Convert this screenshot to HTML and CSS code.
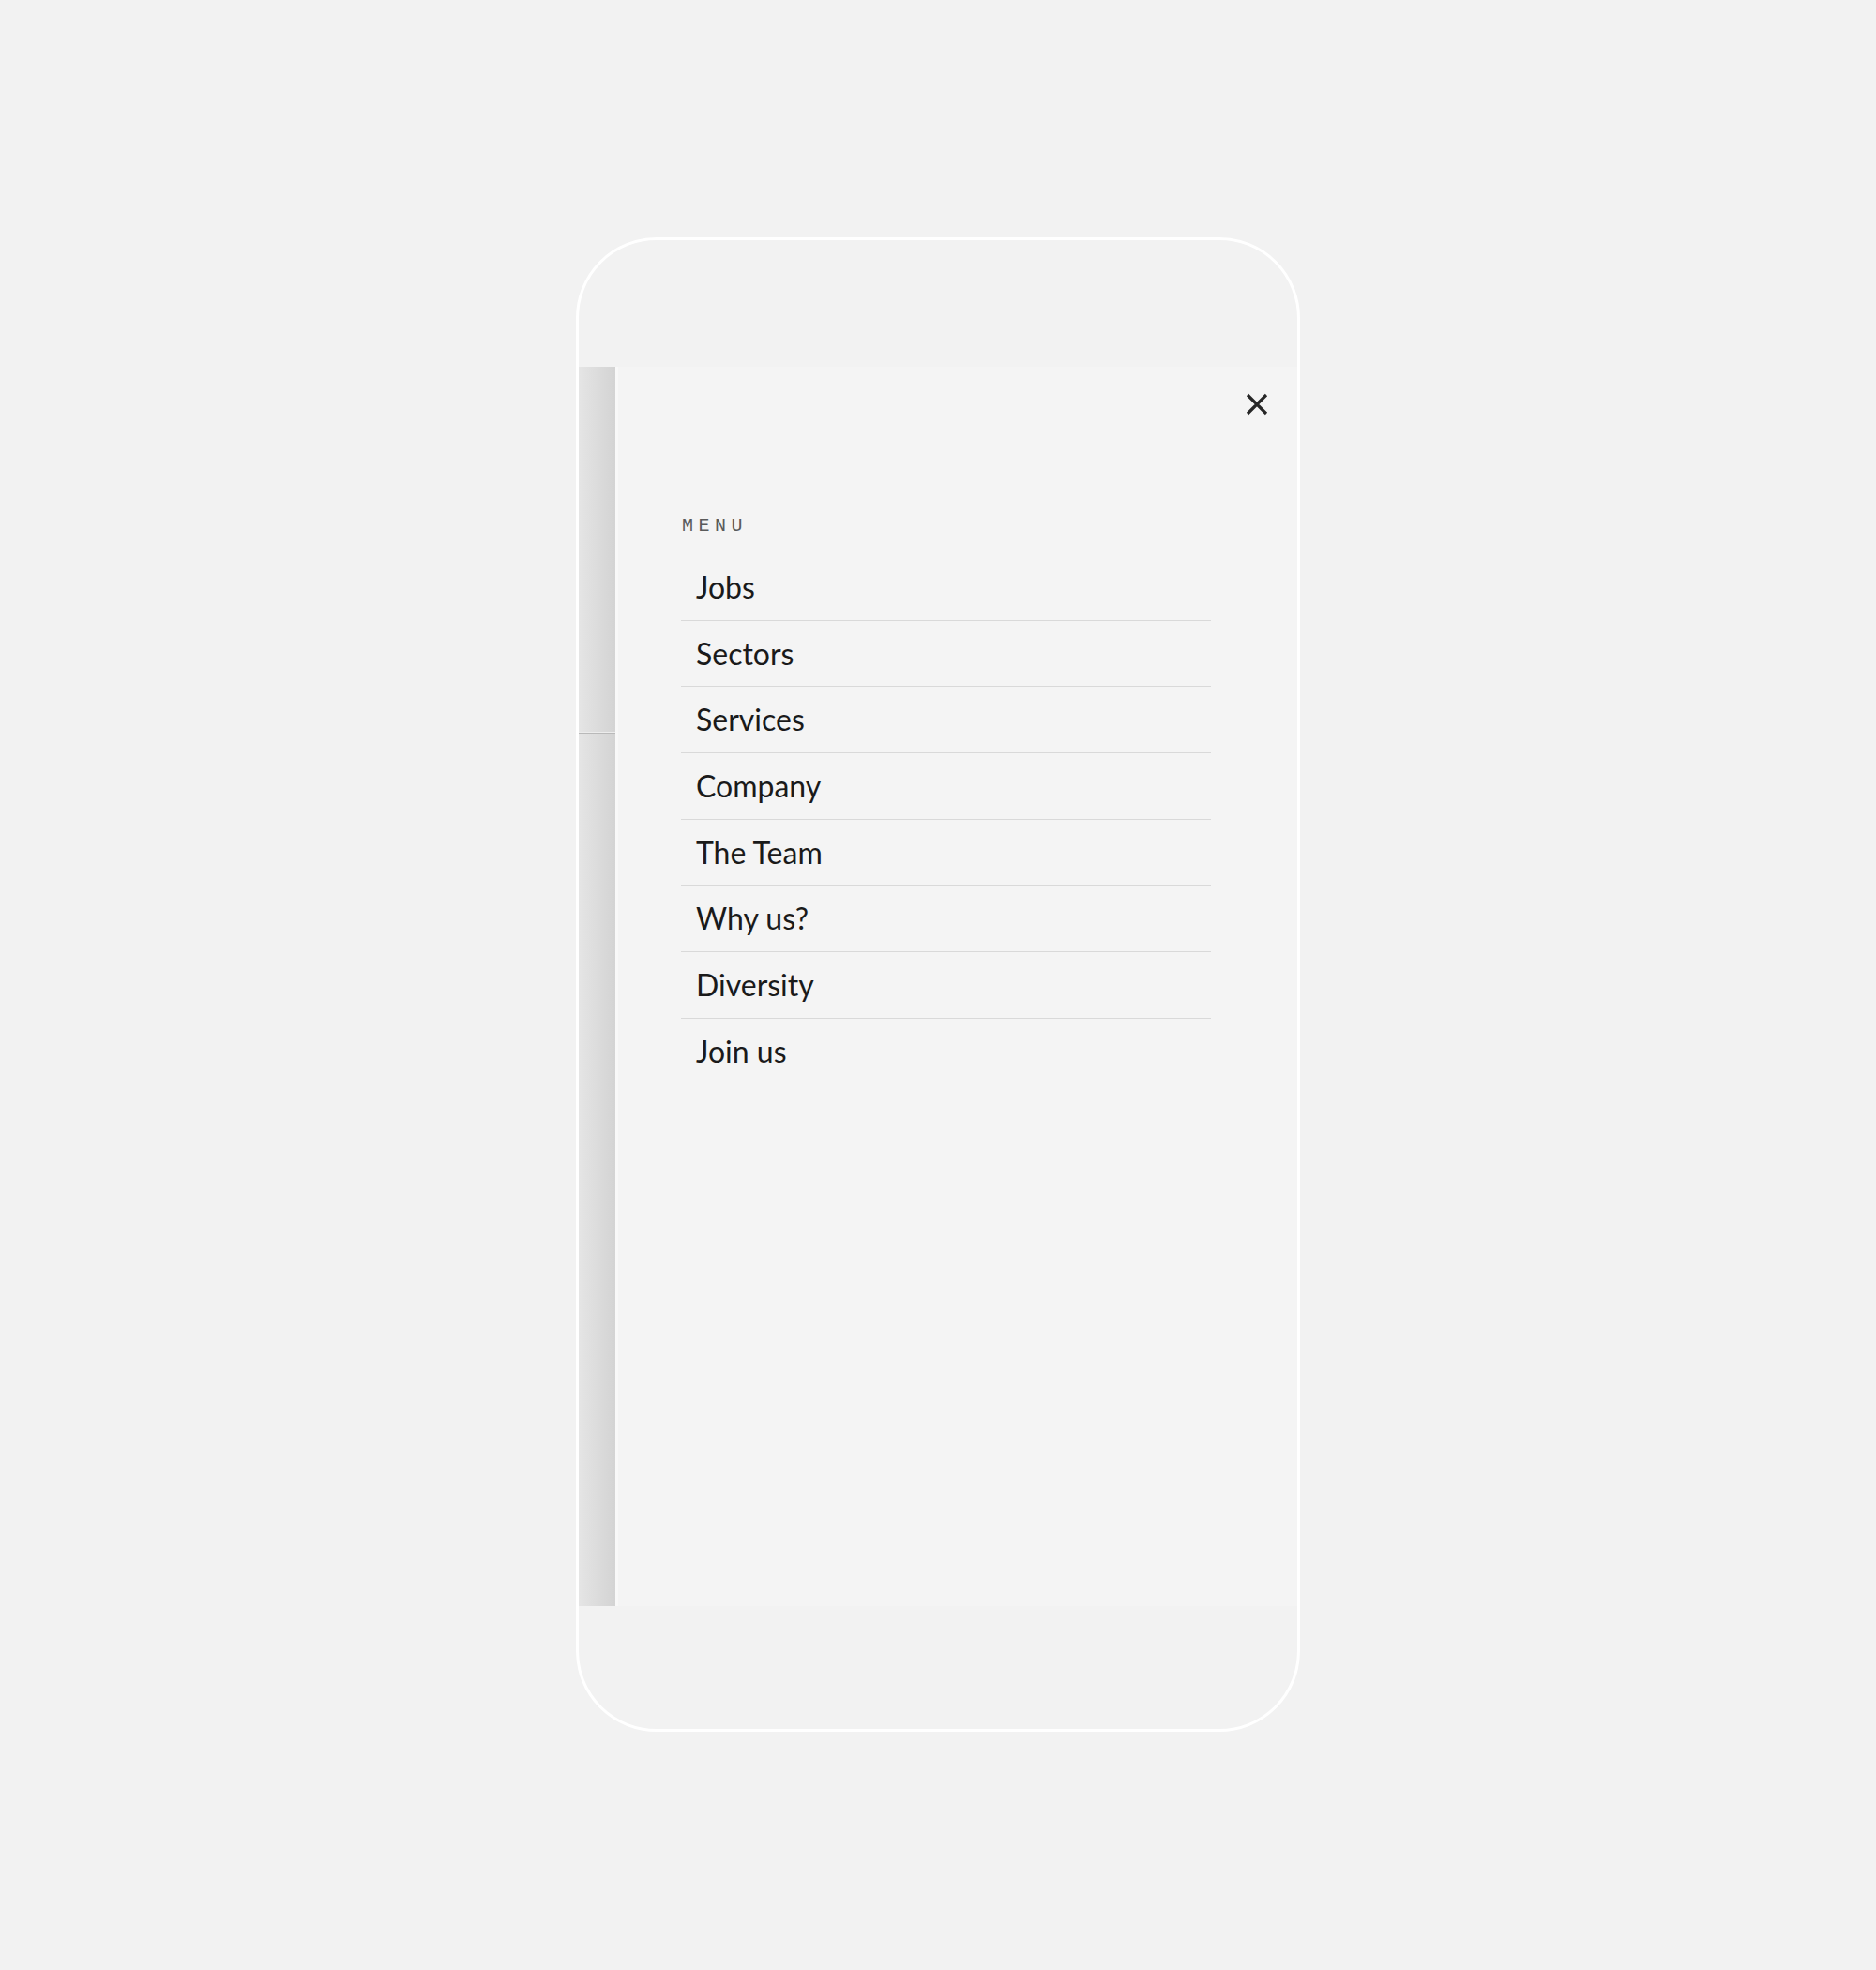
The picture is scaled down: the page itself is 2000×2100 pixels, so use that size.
FILE: index.html
```html
<!DOCTYPE html>
<html lang="en">
<head>
<meta charset="utf-8">
<title>Menu</title>
<link rel="stylesheet" href="styles.css">
</head>
<body>
<div class="device">
  <div class="device-top"></div>
  <div class="screen">
    <div class="backdrop">
      <div class="backdrop-line"></div>
    </div>
    <aside class="drawer">
      <div class="drawer-head">
        <button class="close" aria-label="Close menu">
          <svg width="24" height="24" viewBox="0 0 24 24" aria-hidden="true">
            <path d="M2 2 L22 22 M22 2 L2 22" stroke="#262626" stroke-width="3.2" fill="none"/>
          </svg>
        </button>
      </div>
      <nav class="menu">
        <div class="menu-label">MENU</div>
        <ul class="menu-list">
          <li><a href="#">Jobs</a></li>
          <li><a href="#">Sectors</a></li>
          <li><a href="#">Services</a></li>
          <li><a href="#">Company</a></li>
          <li><a href="#">The Team</a></li>
          <li><a href="#">Why us?</a></li>
          <li><a href="#">Diversity</a></li>
          <li><a href="#">Join us</a></li>
        </ul>
      </nav>
    </aside>
  </div>
</div>
</body>
</html>
```
FILE: styles.css
```css
html, body {
  margin: 0;
  padding: 0;
}

body {
  background: #f2f2f2;
  font-family: "Lato", "Liberation Sans", sans-serif;
}

.device {
  margin: 253px 0 0 614px;
  width: 772px;
  height: 1593px;
  box-sizing: border-box;
  border: 3px solid #ffffff;
  border-radius: 86px;
  display: flex;
  flex-direction: column;
  overflow: hidden;
  background: #f2f2f2;
}

.device-top {
  height: 135px;
  flex: none;
}

.screen {
  height: 1321px;
  flex: none;
  display: flex;
}

.backdrop {
  width: 39px;
  flex: none;
  background: linear-gradient(to right, #e5e5e5, #d3d3d3);
  padding-top: 390px;
  box-sizing: border-box;
}

.backdrop-line {
  height: 1px;
  background: #b9b9b9;
  box-shadow: 0 -1px 0 #ececec;
}

.drawer {
  flex: 1;
  background: #f4f4f4;
  border-left: 3px solid #f8f8f8;
}

.drawer-head {
  height: 52px;
  display: flex;
  justify-content: flex-end;
  align-items: flex-end;
  padding-right: 31px;
}

.close {
  border: 0;
  padding: 0;
  margin: 0;
  background: none;
  width: 24px;
  height: 24px;
  display: block;
  cursor: pointer;
}

.close svg {
  display: block;
}

.menu {
  margin: 106px 0 0 67px;
  width: 565px;
}

.menu-label {
  font-family: "Liberation Mono", "DejaVu Sans Mono", monospace;
  font-size: 20px;
  line-height: 24px;
  letter-spacing: 5.5px;
  color: #5a5a5a;
  margin-bottom: 18px;
  padding-left: 1px;
}

.menu-list {
  list-style: none;
  margin: 0;
  padding: 0;
}

.menu-list li {
  height: 69.67px;
  border-bottom: 1px solid #d9d9d9;
}

.menu-list li:last-child {
  border-bottom: 0;
}

.menu-list a {
  display: block;
  padding-left: 16px;
  font-size: 32px;
  line-height: 69.67px;
  color: #1a1a1a;
  text-decoration: none;
  font-weight: 400;
}
```
